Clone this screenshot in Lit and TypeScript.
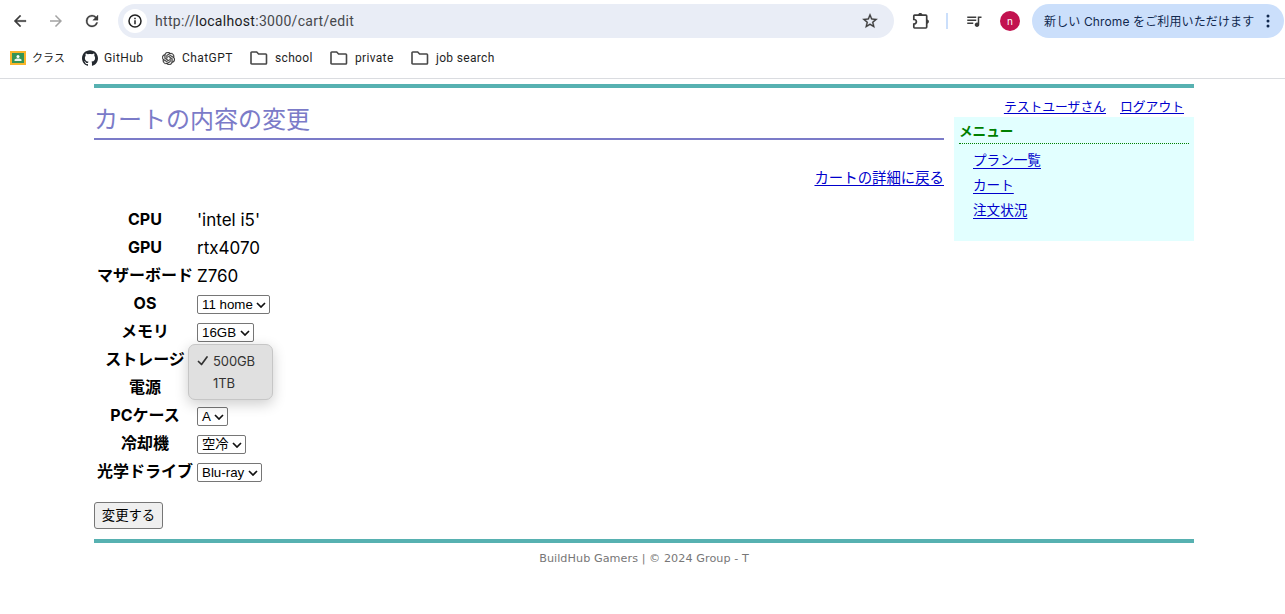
import { LitElement, html, svg, css } from "lit";
import { customElement } from "lit/decorators.js";

const folder = html`<svg class="folder" viewBox="0 0 18 14"><path d="M1.8 1h4.9l1.9 2h7.1c.5 0 .8.3.8.8v8.4c0 .5-.3.8-.8.8H1.8c-.5 0-.8-.3-.8-.8V1.8c0-.5.3-.8.8-.8z" fill="none" stroke="#474747" stroke-width="1.6"/></svg>`;

const icon = (d: string, cls: string) =>
  html`<svg class="icon ${cls}" viewBox="0 0 24 24">${svg`<path d=${d} />`}</svg>`;

const BACK = "M20 11H7.83l5.59-5.59L12 4l-8 8 8 8 1.41-1.41L7.83 13H20v-2z";
const FORWARD = "M12 4l-1.41 1.41L16.17 11H4v2h12.17l-5.58 5.59L12 20l8-8z";
const RELOAD = "M17.65 6.35A7.958 7.958 0 0 0 12 4a8 8 0 1 0 7.73 10h-2.08A6 6 0 1 1 12 6c1.66 0 3.14.69 4.22 1.78L13 11h7V4l-2.35 2.35z";
const STAR = "M22 9.24l-7.19-.62L12 2 9.19 8.63 2 9.24l5.46 4.73L5.82 21 12 17.27 18.18 21l-1.63-7.03L22 9.24zM12 15.4l-3.76 2.27 1-4.28-3.32-2.88 4.38-.38L12 6.1l1.71 4.04 4.38.38-3.32 2.88 1 4.28L12 15.4z";
const QUEUE = "M15 6H3v2h12V6zm0 4H3v2h12v-2zM3 16h8v-2H3v2zM17 6v8.18c-.31-.11-.65-.18-1-.18-1.66 0-3 1.34-3 3s1.34 3 3 3 3-1.34 3-3V8h3V6h-5z";
const GITHUB = "M12 .297c-6.63 0-12 5.373-12 12 0 5.303 3.438 9.8 8.205 11.385.6.113.82-.258.82-.577 0-.285-.01-1.04-.015-2.04-3.338.724-4.042-1.61-4.042-1.61C4.422 18.07 3.633 17.7 3.633 17.7c-1.087-.744.084-.729.084-.729 1.205.084 1.838 1.236 1.838 1.236 1.07 1.835 2.809 1.305 3.495.998.108-.776.417-1.305.76-1.605-2.665-.3-5.466-1.332-5.466-5.93 0-1.31.465-2.38 1.235-3.22-.135-.303-.54-1.523.105-3.176 0 0 1.005-.322 3.3 1.23.96-.267 1.98-.399 3-.405 1.02.006 2.04.138 3 .405 2.28-1.552 3.285-1.23 3.285-1.23.645 1.653.24 2.873.12 3.176.765.84 1.23 1.91 1.23 3.22 0 4.61-2.805 5.625-5.475 5.92.42.36.81 1.096.81 2.22 0 1.606-.015 2.896-.015 3.286 0 .315.21.69.825.57C20.565 22.092 24 17.592 24 12.297c0-6.627-5.373-12-12-12";
const OPENAI = "M22.2819 9.8211a5.9847 5.9847 0 0 0-.5157-4.9108 6.0462 6.0462 0 0 0-6.5098-2.9A6.0651 6.0651 0 0 0 4.9807 4.1818a5.9847 5.9847 0 0 0-3.9977 2.9 6.0462 6.0462 0 0 0 .7427 7.0966 5.98 5.98 0 0 0 .511 4.9107 6.051 6.051 0 0 0 6.5146 2.9001A5.9847 5.9847 0 0 0 13.2599 24a6.0557 6.0557 0 0 0 5.7718-4.2058 5.9894 5.9894 0 0 0 3.9977-2.9001 6.0557 6.0557 0 0 0-.7475-7.0729zm-9.022 12.6081a4.4755 4.4755 0 0 1-2.8764-1.0408l.1419-.0804 4.7783-2.7582a.7948.7948 0 0 0 .3927-.6813v-6.7369l2.02 1.1686a.071.071 0 0 1 .038.052v5.5826a4.504 4.504 0 0 1-4.4945 4.4944zm-9.6607-4.1254a4.4708 4.4708 0 0 1-.5346-3.0137l.142.0852 4.783 2.7582a.7712.7712 0 0 0 .7806 0l5.8428-3.3685v2.3324a.0804.0804 0 0 1-.0332.0615L9.74 19.9502a4.4992 4.4992 0 0 1-6.1408-1.6464zM2.3408 7.8956a4.485 4.485 0 0 1 2.3655-1.9728V11.6a.7664.7664 0 0 0 .3879.6765l5.8144 3.3543-2.0201 1.1685a.0757.0757 0 0 1-.071 0l-4.8303-2.7865A4.504 4.504 0 0 1 2.3408 7.872zm16.5963 3.8558L13.1038 8.364 15.1192 7.2a.0757.0757 0 0 1 .071 0l4.8303 2.7913a4.4944 4.4944 0 0 1-.6765 8.1042v-5.6772a.79.79 0 0 0-.407-.667zm2.0107-3.0231l-.142-.0852-4.7735-2.7818a.7759.7759 0 0 0-.7854 0L9.409 9.2297V6.8974a.0662.0662 0 0 1 .0284-.0615l4.8303-2.7866a4.4992 4.4992 0 0 1 6.6802 4.66zM8.3065 12.863l-2.02-1.1638a.0804.0804 0 0 1-.038-.0567V6.0742a4.4992 4.4992 0 0 1 7.3757-3.4537l-.142.0805L8.704 5.459a.7948.7948 0 0 0-.3927.6813zm1.0976-2.3654l2.602-1.4998 2.6069 1.4998v2.9994l-2.5974 1.4997-2.6067-1.4997Z";

@customElement("browser-bar")
class BrowserBar extends LitElement {
  static styles = css`
    :host { display: block; height: 79px; border-bottom: 1px solid #dadce0; font-family: Inter, "Noto Sans CJK JP", sans-serif; color: #1f1f1f; background: #fff; }
    * { box-sizing: border-box; }
    svg { display: block; flex: none; }
    .tools { display: flex; align-items: center; height: 42px; padding-left: 11px; }
    .icon { width: 18px; height: 18px; fill: #3c3c3c; }
    .back, .reload { stroke: #3c3c3c; stroke-width: .4; }
    .forward { margin-left: 18px; fill: #a3a3a3; }
    .reload { margin-left: 18px; }
    .omni { display: flex; align-items: center; width: 776px; height: 34px; margin-left: 17px; padding: 0 15px 0 5px; border-radius: 17px; background: #e9edf6; }
    .star { stroke: #3c3c3c; stroke-width: .4; }
    .info { display: flex; align-items: center; justify-content: center; width: 24px; height: 24px; border-radius: 50%; background: #fff; }
    .info svg { width: 14px; height: 14px; }
    .url { margin-left: 8px; font: 14px/20px Roboto, sans-serif; letter-spacing: .3px; color: #46484c; flex: 1; }
    .url b { font-weight: 400; color: #1b1c1e; }
    .puzzle { width: 20px; height: 20px; margin-left: 17px; }
    .sep { width: 2px; height: 16px; margin-left: 15px; background: #cbdffb; }
    .queue { margin-left: 17px; }
    .avatar { width: 20px; height: 20px; margin-left: 17px; border-radius: 50%; background: #c2124f; color: #fff; font-size: 10px; line-height: 20px; text-align: center; }
    .update { display: flex; align-items: center; height: 34px; width: 252px; margin-left: 12px; padding-left: 12px; border-radius: 17px; background: #cbdffb; color: #10284e; font-size: 12px; font-weight: 400; letter-spacing: .13px; white-space: nowrap; }
    .update span { flex: 1; padding-bottom: 2px; }
    .dots { width: 4px; height: 16px; margin-right: 14px; fill: #10284e; }
    .marks { display: flex; align-items: center; height: 32px; padding-left: 10px; font: 12px/16px Roboto, "Noto Sans CJK JP", sans-serif; letter-spacing: .33px; white-space: nowrap; }
    .mark { display: flex; align-items: center; }
    .m1 { width: 72px; } .m2 { width: 80px; } .m3 { width: 88px; } .m4 { width: 80px; } .m5 { width: 81px; }
    .m1 span { font-size: 11px; letter-spacing: .1px; padding-top: 1px; }
    .m2 span, .m3 span { letter-spacing: .42px; }
    .classroom { width: 16px; height: 14px; margin-right: 6px; }
    .github { width: 16px; height: 16px; margin-right: 6px; fill: #24292f; }
    .openai { width: 13px; height: 13px; margin-right: 7px; fill: #333; stroke: #333; stroke-width: .5; }
    .folder { width: 18px; height: 14px; margin-right: 7px; }
  `;
  render() {
    return html`
      <div class="tools">
        ${icon(BACK, "back")}${icon(FORWARD, "forward")}${icon(RELOAD, "reload")}
        <div class="omni">
          <div class="info"><svg viewBox="0 0 14 14"><circle cx="7" cy="7" r="6" fill="none" stroke="#222" stroke-width="1.5"/><path d="M7 6.2v4M7 3.7v1.5" stroke="#222" stroke-width="1.5"/></svg></div>
          <div class="url">http://<b>localhost</b>:3000/cart/edit</div>
          ${icon(STAR, "star")}
        </div>
        <svg class="puzzle" viewBox="0 0 20 20"><path d="M15.700 12.500v3.600c0 .5-.4.9-.9.9H3.600c-.5 0-.8-.4-.8-.9v-3c1.600 0 2.600-1 2.600-2.300s-1-2.300-2.600-2.300V5c0-.5.3-.8.8-.8h11.200c.5 0 .9.4.9.9z" fill="none" stroke="#3c3c3c" stroke-width="1.700"/><path d="M7.200 4c0-2.600 4.200-2.600 4.200 0zM16 8.500c2.600 0 2.600 4.200 0 4.200z" fill="#3c3c3c"/></svg>
        <div class="sep"></div>
        ${icon(QUEUE, "queue")}
        <div class="avatar">n</div>
        <div class="update"><span>新しい Chrome をご利用いただけます</span><svg class="dots" viewBox="0 0 4 16"><circle cx="2" cy="3" r="1.500"/><circle cx="2" cy="8" r="1.500"/><circle cx="2" cy="13" r="1.500"/></svg></div>
      </div>
      <div class="marks">
        <div class="mark m1"><svg class="classroom" viewBox="0 0 16 14"><path fill="#f9b529" d="M0 0h16v14H0z"/><path fill="#359455" d="M2 2h12v10H2z"/><circle cx="8" cy="5.500" r="1.500" fill="#fff"/><path d="M4.500 10V9c0-1 1.500-1.500 3.500-1.500s3.500.5 3.500 1.500v1z" fill="#e8f5ec"/></svg><span>クラス</span></div>
        <div class="mark m2">${icon(GITHUB, "github")}<span>GitHub</span></div>
        <div class="mark m3">${icon(OPENAI, "openai")}<span>ChatGPT</span></div>
        <div class="mark m4">${folder}<span>school</span></div>
        <div class="mark m5">${folder}<span>private</span></div>
        <div class="mark">${folder}<span>job search</span></div>
      </div>`;
  }
}

type Row = { label: string; text?: string; value?: string; w?: string };
const ROWS: Row[] = [
  { label: "CPU", text: "'intel i5'" },
  { label: "GPU", text: "rtx4070" },
  { label: "マザーボード", text: "Z760" },
  { label: "OS", value: "11 home", w: "s73" },
  { label: "メモリ", value: "16GB", w: "s57" },
  { label: "ストレージ" },
  { label: "電源" },
  { label: "PCケース", value: "A", w: "s31" },
  { label: "冷却機", value: "空冷", w: "s49" },
  { label: "光学ドライブ", value: "Blu-ray", w: "s65" },
];

@customElement("app-root")
class AppRoot extends LitElement {
  static styles = css`
    :host { display: block; height: 614px; overflow: hidden; background: #fff; color: #000; font-family: "Liberation Sans", "Noto Sans CJK JP", sans-serif; }
    * { box-sizing: border-box; }
    a { color: #0000cc; text-decoration: underline; text-decoration-thickness: 1px; text-underline-offset: 2px; text-decoration-skip-ink: none; }
    .page { width: 1100px; margin: 5px 0 0 94px; }
    .body { display: flex; justify-content: space-between; height: 459px; border-top: 4px solid #57b1b1; border-bottom: 4px solid #57b1b1; }
    .main { width: 850px; }
    h1 { height: 52px; margin: 0; padding-top: 15px; border-bottom: 2px solid #7b7bc8; color: #7b7bc8; font-size: 24px; line-height: 34px; font-weight: 400; }
    .return { height: 65px; padding-top: 26px; text-align: right; font-size: 14.4px; line-height: 24px; }
    .table { display: grid; grid-template-columns: 102px 1fr; grid-auto-rows: 28px; align-items: center; position: relative; font-size: 16px; line-height: 26px; }
    .th { font-family: Inter, "Noto Sans CJK JP", sans-serif; font-weight: 700; letter-spacing: 0; text-align: center; white-space: nowrap; }
    .td { padding: 1px 0 0 1px; font-family: Inter, sans-serif; font-size: 17px; }
    .select { display: flex; align-items: center; justify-content: space-between; height: 19px; margin-top: 2px; padding: 0 3px 0 4px; border: 1px solid #767676; border-radius: 2px; font: 13.33px/17px "Liberation Sans", "Noto Sans CJK JP", sans-serif; white-space: nowrap; background: #fff; }
    .select svg { width: 10px; height: 6px; flex: none; }
    .s73 { width: 73px; } .s57 { width: 57px; } .s31 { width: 31px; } .s49 { width: 49px; } .s65 { width: 65px; }
    .popup { position: absolute; left: 94px; top: 139px; width: 85px; height: 56px; padding: 5px 0 0 8px; border: 1px solid #c6c6c6; border-radius: 7px; background: #e0e0e0; box-shadow: 0 4px 14px rgba(0,0,0,.2); font: 13px/22px Inter, sans-serif; color: #333; }
    .opt { display: flex; align-items: center; height: 22px; letter-spacing: -.1px; }
    .tick { width: 16px; }
    .tick svg { display: block; width: 12px; height: 10px; }
    .submit { display: flex; align-items: center; justify-content: center; width: 69px; height: 27px; margin-top: 17px; padding: 0 0 2px; border: 1px solid #767676; border-radius: 3px; background: #efefef; color: #000; font: 13.33px/20px "Noto Sans CJK JP", sans-serif; }
    .side { width: 240px; }
    .user { display: flex; justify-content: flex-end; gap: 14px; height: 29px; padding: 9px 10px 0 0; font-size: 12.8px; line-height: 20px; white-space: nowrap; }
    .menu { height: 124px; padding: 4px 5px; background: #e2ffff; }
    .menu h2 { height: 23px; margin: 0 0 4px; padding-top: 1px; border-bottom: 1px dotted #008000; color: #008000; font-size: 13.6px; line-height: 20px; font-weight: 700; }
    .item { height: 25px; padding-left: 14px; font-size: 13.6px; line-height: 25px; }
    .item a { text-underline-offset: 3px; }
    .foot { padding-top: 8px; text-align: center; font: 11.2px/16px "DejaVu Sans", sans-serif; letter-spacing: .06px; color: #777; }
  `;
  render() {
    return html`
      <browser-bar></browser-bar>
      <div class="page">
        <div class="body">
          <div class="main">
            <h1>カートの内容の変更</h1>
            <div class="return"><a>カートの詳細に戻る</a></div>
            <div class="table">
              ${ROWS.map((r) => html`
                <div class="th">${r.label}</div>
                <div class="td">${r.value
                  ? html`<div class="select ${r.w}"><span>${r.value}</span><svg viewBox="0 0 10 6"><path d="M1 1l4 4 4-4" fill="none" stroke="#111" stroke-width="1.700"/></svg></div>`
                  : r.text ?? ""}</div>`)}
              <div class="popup">
                <div class="opt"><span class="tick"><svg viewBox="0 0 12 10"><path d="M1.500 5.500l3 3L10 1" fill="none" stroke="#333" stroke-width="1.700" stroke-linecap="round" stroke-linejoin="round"/></svg></span>500GB</div>
                <div class="opt"><span class="tick"></span>1TB</div>
              </div>
            </div>
            <button class="submit">変更する</button>
          </div>
          <div class="side">
            <div class="user"><a>テストユーザさん</a><a>ログアウト</a></div>
            <div class="menu">
              <h2>メニュー</h2>
              <div class="item"><a>プラン一覧</a></div>
              <div class="item"><a>カート</a></div>
              <div class="item"><a>注文状況</a></div>
            </div>
          </div>
        </div>
        <div class="foot">BuildHub Gamers | © 2024 Group - T</div>
      </div>`;
  }
}
